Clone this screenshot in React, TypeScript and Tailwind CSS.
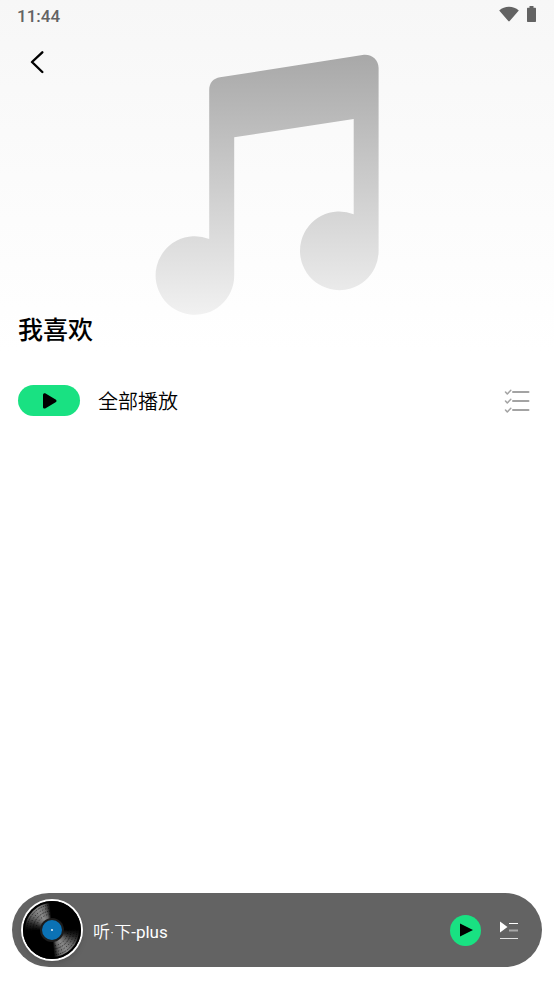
import React, { useState } from "react";

const playlist = {
  title: "我喜欢",
  playAll: "全部播放",
};

function StatusBar() {
  return (
    <div className="flex h-8 items-center justify-between px-[17px] text-[#636363]">
      <span className="text-[17px] leading-8 font-medium">11:44</span>
      <div className="flex items-center gap-2 pb-1">
        <svg width="20" height="16" viewBox="0 0 20 16" fill="currentColor">
          <path d="M0.2 4.4C3 2 6.3.8 10 .8s7 1.2 9.800 3.600L10.700 15.100a.9.9 0 0 1-1.400 0z" />
        </svg>
        <svg width="10" height="16" viewBox="0 0 10 16" fill="currentColor">
          <path d="M2.500 0h4v1.700h1.500c.7 0 1 .4 1 1V15c0 .6-.3 1-1 1H1c-.7 0-1-.4-1-1V2.700c0-.6.3-1 1-1h1.500z" />
        </svg>
      </div>
    </div>
  );
}

function NoteCover() {
  return (
    <svg width="224" height="262" viewBox="155 54 224 262" aria-hidden="true">
      <defs>
        <linearGradient id="noteFill" x1="0" y1="0" x2="0" y2="1">
          <stop offset="0" stopColor="#a8a8a8" />
          <stop offset="1" stopColor="#f1f1f1" />
        </linearGradient>
      </defs>
      <path
        fill="url(#noteFill)"
        d="M209.200 90C209.200 83 213.500 78.300 220 77.300L362.500 55C371.500 53.600 378.600 59.500 378.600 68V251A39.300 39.300 0 1 1 353.700 214.300V118.900L234.200 137.300V275.500A39.300 39.300 0 1 1 209.200 238.900Z"
      />
    </svg>
  );
}

// Vinyl disc with two light reflections and a blue label
function Vinyl() {
  return (
    <div className="size-[62px] shrink-0 rounded-full bg-white p-0.5 shadow-md">
      <div className="size-full rounded-full bg-[conic-gradient(#000_0deg,#000_88deg,#222_105deg,#666_125deg,#8a8a8a_145deg,#666_162deg,#000_176deg,#000_268deg,#222_285deg,#666_305deg,#8a8a8a_325deg,#666_342deg,#000_356deg)]">
        <svg viewBox="0 0 58 58" className="size-full" aria-hidden="true">
          <g fill="none" stroke="#000">
            <circle cx="29" cy="29" r="28" strokeWidth="2" />
            <circle cx="29" cy="29" r="25" strokeWidth="0.700" strokeDasharray="1 1" />
            <circle cx="29" cy="29" r="22" strokeWidth="0.700" strokeDasharray="1 2" />
            <circle cx="29" cy="29" r="19" strokeWidth="0.700" strokeDasharray="1 1" />
            <circle cx="29" cy="29" r="16" strokeWidth="0.700" strokeDasharray="1 2" />
          </g>
          <circle cx="29" cy="29" r="12" fill="#1c1c1c" />
          <circle cx="29" cy="29" r="10" fill="#0b72b5" />
          <circle cx="29" cy="29" r="0.900" fill="#fff" />
        </svg>
      </div>
    </div>
  );
}

function PlayerBar() {
  const [playing, setPlaying] = useState(false);

  return (
    <footer className="mx-3 mb-[19px] flex h-[74px] items-center rounded-full bg-[#636363] pr-6 pl-[9px]">
      <Vinyl />
      <span className="ml-2.5 flex-1 truncate pt-1 font-[Roboto,'Noto_Sans_CJK_SC',sans-serif] text-[17px] leading-7 font-[350] text-white">
        听·下<span className="font-normal">-plus</span>
      </span>
      <button
        type="button"
        aria-label="播放"
        aria-pressed={playing}
        onClick={() => setPlaying(!playing)}
        className="flex size-[31px] items-center justify-center rounded-full bg-[#19e182]"
      >
        <svg width="13" height="14" viewBox="0 0 13 14" className="ml-0.5">
          <path d="M0 .5 13 7 0 13.500z" />
        </svg>
      </button>
      <button type="button" aria-label="播放列表" className="ml-[19px]">
        <svg width="18" height="18" viewBox="0 0 18 18">
          <path d="M0 .5 7.500 6 0 11.500z" fill="#fff" />
          <path d="M9 2.500h9" stroke="#fff" />
          <path d="M9 9.500h9" stroke="#a8a8a8" strokeWidth="2" />
          <path d="M0 17.500h18" stroke="#e2e2e2" />
        </svg>
      </button>
    </footer>
  );
}

export default function App() {
  return (
    <div className="flex min-h-screen flex-col bg-white font-[Roboto,'Noto_Sans_CJK_SC',sans-serif] text-black">
      <header className="bg-linear-to-b from-[#f7f7f7] to-white">
        <StatusBar />
        <div className="grid grid-cols-[1fr_auto_1fr] items-start pt-[22px] pr-9 pl-4">
          <button type="button" aria-label="返回" className="-mt-3 flex size-[42px] items-center justify-center">
            <svg width="14" height="24" viewBox="0 0 14 24" fill="none" stroke="currentColor" strokeWidth="2.400" strokeLinecap="round" strokeLinejoin="round">
              <path d="M12.300 1.300 2 11l10.300 10" />
            </svg>
          </button>
          <NoteCover />
        </div>
        <h1 className="px-[18px] pb-1.5 text-[25px] leading-[30px] font-medium">{playlist.title}</h1>
      </header>

      <main className="flex-1">
        <div className="flex items-center px-[18px] pt-[33px] pr-6">
          <button type="button" className="flex items-center gap-[18px] text-[20px] leading-[31px]">
            <span className="flex h-[31px] w-[62px] items-center justify-center rounded-full bg-[#19e182]">
              <svg width="14" height="16" viewBox="0 0 14 16" className="ml-0.5">
                <path d="M0 2C0 .6 1.400-.1 2.600.6l10 6c1.200.7 1.200 2 0 2.700l-10 6C1.400 16 0 15.400 0 14z" />
              </svg>
            </span>
            <span className="font-['Noto_Sans_CJK_SC',sans-serif] font-[350]">{playlist.playAll}</span>
          </button>
          <button type="button" aria-label="多选" className="ml-auto">
            <svg width="26" height="24" viewBox="0 0 26 24" fill="none" stroke="#a3a3a3" strokeLinecap="round" strokeLinejoin="round">
              <path d="M9 3h15.500M9 12h15.500M9 21h15.500" strokeWidth="2" />
              <path d="M1.500 3 3.300 5 6.800 1.200M1.500 12l1.800 2 3.500-3.800M1.500 21l1.800 2 3.500-3.800" strokeWidth="1.500" />
            </svg>
          </button>
        </div>
      </main>

      <PlayerBar />
    </div>
  );
}
